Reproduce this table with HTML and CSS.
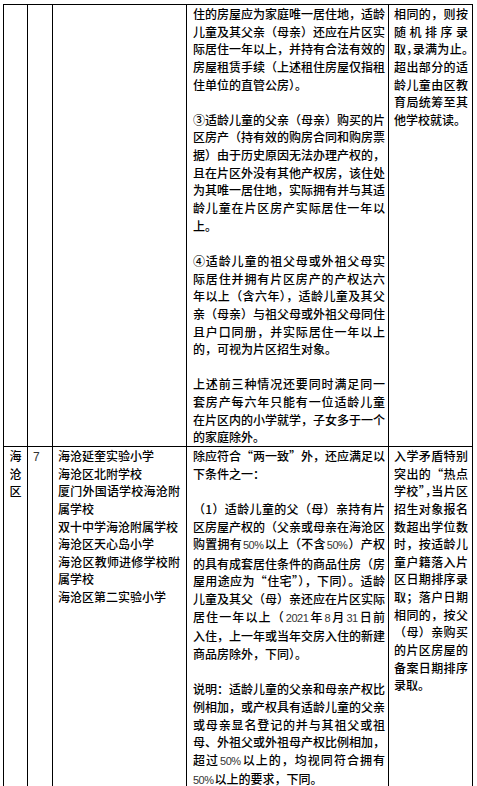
FILE: index.html
```html
<!DOCTYPE html>
<html lang="zh-CN">
<head>
<meta charset="utf-8">
<title>海沧区招生表</title>
<link rel="stylesheet" href="styles.css">
</head>
<body>
<div class="sheet">
  <div class="c c1"></div>
  <div class="c c2"></div>
  <div class="c c3"></div>
  <div class="c c4">
    <span class="ln j">住的房屋应为家庭唯一居住地，适龄</span>
    <span class="ln j">儿童及其父亲（母亲）还应在片区实</span>
    <span class="ln j">际居住一年以上，并持有合法有效的</span>
    <span class="ln j">房屋租赁手续（上述租住房屋仅指租</span>
    <span class="ln">住单位的直管公房）。</span>
    <span class="gap"></span>
    <span class="ln j">③适龄儿童的父亲（母亲）购买的片</span>
    <span class="ln j">区房产（持有效的购房合同和购房票</span>
    <span class="ln j">据）由于历史原因无法办理产权的，</span>
    <span class="ln j">且在片区外没有其他产权房，该住处</span>
    <span class="ln j">为其唯一居住地，实际拥有并与其适</span>
    <span class="ln j">龄儿童在片区房产实际居住一年以</span>
    <span class="ln">上。</span>
    <span class="gap"></span>
    <span class="ln j">④适龄儿童的祖父母或外祖父母实</span>
    <span class="ln j">际居住并拥有片区房产的产权达六</span>
    <span class="ln j">年以上（含六年），适龄儿童及其父</span>
    <span class="ln j">亲（母亲）与祖父母或外祖父母同住</span>
    <span class="ln j">且户口同册，并实际居住一年以上</span>
    <span class="ln">的，可视为片区招生对象。</span>
    <span class="gap"></span>
    <span class="ln j">上述前三种情况还要同时满足同一</span>
    <span class="ln j">套房产每六年只能有一位适龄儿童</span>
    <span class="ln j">在片区内的小学就学，子女多于一个</span>
    <span class="ln">的家庭除外。</span>
  </div>
  <div class="c c5">
    <span class="ln j">相同的，则按</span>
    <span class="ln j">随机排序录</span>
    <span class="ln j h">取，录满为止。</span>
    <span class="ln j">超出部分的适</span>
    <span class="ln j">龄儿童由区教</span>
    <span class="ln j">育局统筹至其</span>
    <span class="ln">他学校就读。</span>
  </div>

  <div class="c c1">
    <span class="ln">海</span>
    <span class="ln">沧</span>
    <span class="ln">区</span>
  </div>
  <div class="c c2"><span class="num">7</span></div>
  <div class="c c3">
    <span class="ln">海沧延奎实验小学</span>
    <span class="ln">海沧区北附学校</span>
    <span class="ln j">厦门外国语学校海沧附</span>
    <span class="ln">属学校</span>
    <span class="ln">双十中学海沧附属学校</span>
    <span class="ln">海沧区天心岛小学</span>
    <span class="ln j">海沧区教师进修学校附</span>
    <span class="ln">属学校</span>
    <span class="ln">海沧区第二实验小学</span>
  </div>
  <div class="c c4">
    <span class="ln j">除应符合“两一致”外，还应满足以</span>
    <span class="ln">下条件之一：</span>
    <span class="gap"></span>
    <span class="ln j">（1）适龄儿童的父（母）亲持有片</span>
    <span class="ln j">区房屋产权的（父亲或母亲在海沧区</span>
    <span class="ln j tight">购置拥有<span class="n">50%</span>以上（不含<span class="n">50%</span>）产权</span>
    <span class="ln j">的具有成套居住条件的商品住房（房</span>
    <span class="ln j">屋用途应为“住宅”），下同）。适龄</span>
    <span class="ln j">儿童及其父（母）亲还应在片区实际</span>
    <span class="ln j">居住一年以上（<span class="n">2021</span>年<span class="n">8</span>月<span class="n">31</span>日前</span>
    <span class="ln j">入住，上一年或当年交房入住的新建</span>
    <span class="ln">商品房除外，下同）。</span>
    <span class="gap"></span>
    <span class="ln j">说明：适龄儿童的父亲和母亲产权比</span>
    <span class="ln j">例相加，或产权具有适龄儿童的父亲</span>
    <span class="ln j">或母亲显名登记的并与其祖父或祖</span>
    <span class="ln j">母、外祖父或外祖母产权比例相加，</span>
    <span class="ln j">超过<span class="n">50%</span>以上的，均视同符合拥有</span>
    <span class="ln"><span class="n n0">50%</span>以上的要求，下同。</span>
  </div>
  <div class="c c5">
    <span class="ln j">入学矛盾特别</span>
    <span class="ln j">突出的“热点</span>
    <span class="ln j h">学校”，当片区</span>
    <span class="ln j">招生对象报名</span>
    <span class="ln j">数超出学位数</span>
    <span class="ln j">时，按适龄儿</span>
    <span class="ln j">童户籍落入片</span>
    <span class="ln j">区日期排序录</span>
    <span class="ln j">取；落户日期</span>
    <span class="ln j">相同的，按父</span>
    <span class="ln j">（母）亲购买</span>
    <span class="ln j">的片区房屋的</span>
    <span class="ln j">备案日期排序</span>
    <span class="ln">录取。</span>
  </div>
</div>
</body>
</html>
```
FILE: styles.css
```css
html, body {
  margin: 0;
  padding: 0;
  background: #fff;
}

body {
  font-family: "Noto Sans CJK SC", "Noto Sans", sans-serif;
  font-size: 12px;
  font-weight: 500;
  line-height: 17.64px;
  color: #000;
}

.sheet {
  display: grid;
  grid-template-columns: 23px 24px 133px 201px 83px;
  gap: 1px;
  width: max-content;
  margin: 4px 0 0 3px;
  background: #000;
  border: 1px solid #000;
}

.c {
  background: #fff;
}

.c1 {
  text-align: center;
}

.c2 {
  padding-left: 5px;
}

.c3 {
  padding: 0 6px 0 5px;
}

.c4 {
  padding: 0 3px 0 6px;
}

.c5 {
  padding: 0 4px 0 5px;
}

.ln {
  display: block;
}

.j {
  text-align: justify;
  text-align-last: justify;
}

.tight {
  white-space: nowrap;
}

.gap {
  display: block;
  height: 17.64px;
}

.n {
  font-family: "Liberation Sans", sans-serif;
  font-size: 11px;
  font-weight: 400;
  letter-spacing: -0.5px;
  margin: 0 1px;
  color: #333;
}

.n0 {
  margin-left: 0;
}

.num {
  font-family: "Liberation Sans", sans-serif;
  font-size: 12px;
  font-weight: 400;
  color: #333;
}

.h {
  font-feature-settings: "halt" 1;
}
```
